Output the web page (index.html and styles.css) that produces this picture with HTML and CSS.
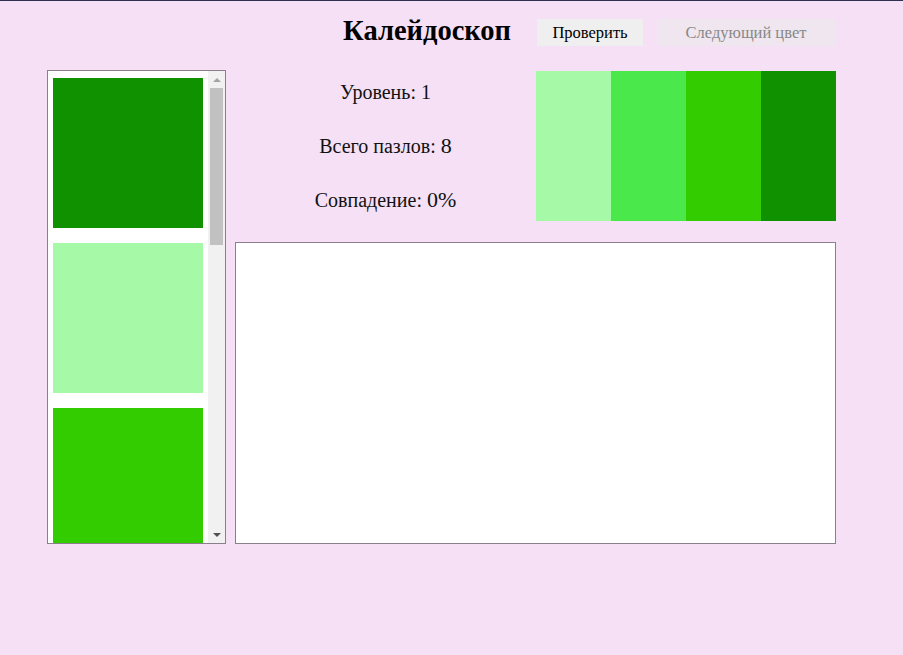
FILE: index.html
```html
<!DOCTYPE html>
<html lang="ru">
<head>
<meta charset="utf-8">
<title>Калейдоскоп</title>
<link rel="stylesheet" href="styles.css">
</head>
<body>
<div class="page">
  <header class="header">
    <h1 class="title">Калейдоскоп</h1>
    <button class="btn btn-check">Проверить</button>
    <button class="btn btn-disabled" disabled>Следующий цвет</button>
  </header>
  <main class="main">
    <aside class="panel">
      <div class="list">
        <div class="swatch" style="background:#0f9100"></div>
        <div class="swatch" style="background:#a6f9a6"></div>
        <div class="swatch" style="background:#33cc00"></div>
      </div>
      <div class="scrollbar">
        <div class="arrow arrow-up"></div>
        <div class="track"><div class="thumb"></div></div>
        <div class="arrow arrow-down"></div>
      </div>
    </aside>
    <section class="right">
      <div class="top">
        <div class="info">
          <p class="line">Уровень: 1</p>
          <p class="line">Всего пазлов: <span class="num">8</span></p>
          <p class="line">Совпадение: <span class="num">0%</span></p>
        </div>
        <div class="palette">
          <div class="stripe" style="background:#a6f9a6"></div>
          <div class="stripe" style="background:#4be84b"></div>
          <div class="stripe" style="background:#33cc00"></div>
          <div class="stripe" style="background:#0f9100"></div>
        </div>
      </div>
      <div class="canvas"></div>
    </section>
  </main>
</div>
</body>
</html>
```
FILE: styles.css
```css
html, body {
  margin: 0;
  padding: 0;
}
body {
  background: #f5e0f5;
  border-top: 1px solid #2f3150;
  font-family: "Liberation Serif", "DejaVu Serif", serif;
  color: #111;
  height: 654px;
}
.page {
  width: 789px;
  margin-left: 47px;
}
.header {
  display: flex;
  justify-content: flex-end;
  align-items: center;
  height: 62px;
  gap: 14px;
  margin-right: 1px;
}
.title {
  margin: 0 12px 2px 0;
  font-size: 28.5px;
  font-weight: bold;
  color: #000;
}
.btn {
  font-family: inherit;
  font-size: 16.5px;
  border: none;
  background: #efefef;
  color: #000;
  height: 27px;
  padding: 0;
  margin-top: 1px;
}
.btn-check { width: 106px; }
.btn-disabled {
  background: #efe6ef;
  color: #888;
  width: 178px;
}
.main {
  display: flex;
  gap: 9px;
  margin-top: 7px;
}
.panel {
  width: 177px;
  height: 472px;
  border: 1px solid #8a7f8a;
  background: #fff;
  display: flex;
  overflow: hidden;
}
.list {
  flex: 1;
  padding: 7px 0 0 5px;
  display: flex;
  flex-direction: column;
  gap: 15px;
}
.swatch {
  width: 150px;
  height: 150px;
  flex: none;
}
.scrollbar {
  width: 17px;
  background: #f1f1f1;
  display: flex;
  flex-direction: column;
}
.arrow {
  height: 17px;
  display: flex;
  align-items: center;
  justify-content: center;
}
.arrow-up::before {
  content: "";
  border-left: 4px solid transparent;
  border-right: 4px solid transparent;
  border-bottom: 4px solid #a3a3a3;
}
.arrow-down::before {
  content: "";
  border-left: 4px solid transparent;
  border-right: 4px solid transparent;
  border-top: 4px solid #505050;
}
.track {
  flex: 1;
  padding: 0 2px;
}
.thumb {
  height: 157px;
  background: #c1c1c1;
}
.right {
  width: 601px;
  display: flex;
  flex-direction: column;
  gap: 21px;
}
.top {
  display: flex;
  height: 150px;
  margin-top: 1px;
}
.info {
  flex: 1;
  text-align: center;
  display: flex;
  flex-direction: column;
  padding-top: 10px;
  gap: 30px;
}
.line {
  margin: 0;
  font-size: 20px;
  line-height: 23px;
}
.num { font-size: 22px; }
.palette {
  display: flex;
  width: 300px;
}
.stripe {
  flex: 1;
}
.canvas {
  height: 300px;
  border: 1px solid #8a7f8a;
  background: #fff;
}
```
